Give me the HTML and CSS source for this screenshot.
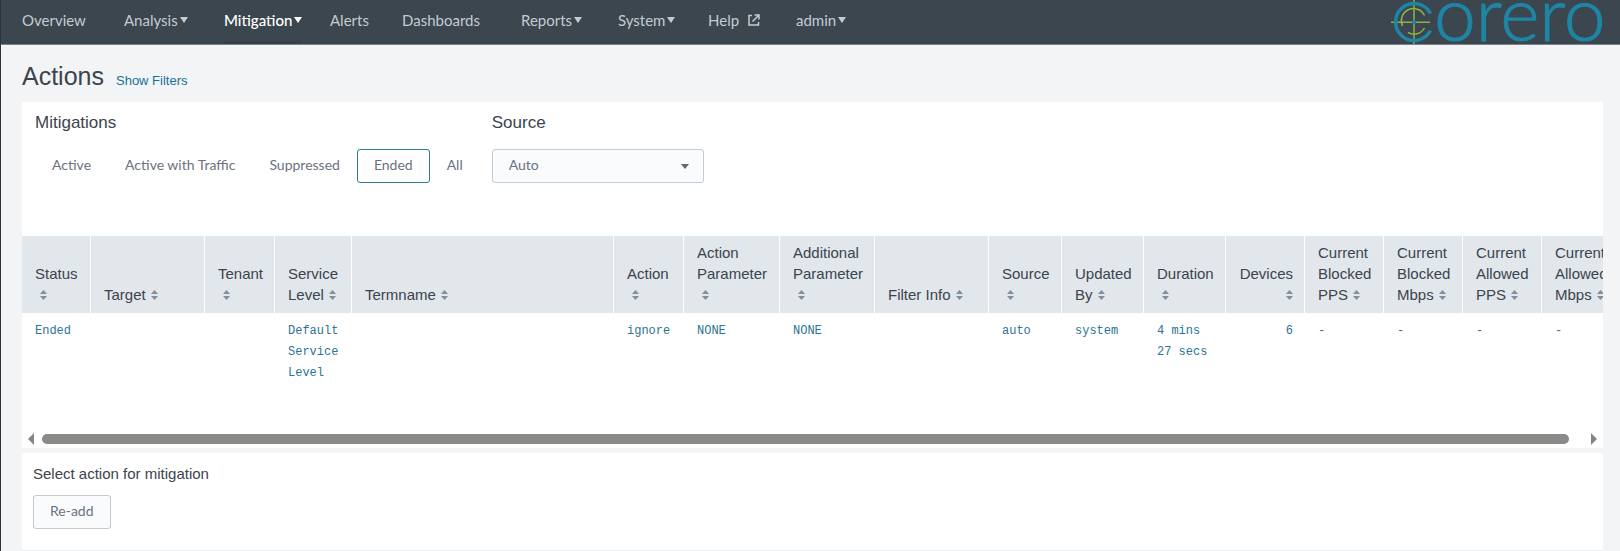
FILE: index.html
```html
<!DOCTYPE html>
<html lang="en">
<head>
    <meta charset="UTF-8">
    <meta name="viewport" content="width=device-width, initial-scale=1.0">
    <title>Actions</title>
    <link rel="stylesheet" href="styles.css">
</head>
<body>
<svg class="sprite" width="0" height="0" aria-hidden="true">
    <symbol id="sort" viewBox="0 0 7 10">
        <path d="M0 4 L3.5 0 L7 4 Z M0 6 L3.5 10 L7 6 Z"/>
    </symbol>
</svg>
<header class="navbar">
    <nav class="menu">
        <a href="#">Overview</a>
        <a href="#" class="has-caret">Analysis</a>
        <a href="#" class="has-caret active">Mitigation</a>
        <a href="#">Alerts</a>
        <a href="#">Dashboards</a>
        <a href="#" class="has-caret">Reports</a>
        <a href="#" class="has-caret">System</a>
        <a href="#">Help
            <svg class="external" viewBox="0 0 12 12" width="12" height="12" fill="none" stroke="currentColor" stroke-width="1.5">
                <path d="M4 1.5 H1 V11 H10.5 V8"/>
                <path d="M4.5 7.5 L10.5 1.5 M6.5 1 H11 V5.5"/>
            </svg>
        </a>
        <a href="#" class="has-caret">admin</a>
    </nav>
    <a href="#" class="logo">
        <svg viewBox="0 0 213 44" width="213" height="44">
            <g fill="none" stroke="#8db04a" stroke-width="1.5">
                <path d="M0 22.3 H39 M23 0 V44"/>
                <path d="M33.5 15.5 A12 12 0 0 0 11.5 26"/>
                <path d="M17 32.5 A12 12 0 0 0 33.5 28"/>
            </g>
            <path d="M39.5 13.5 A18.5 18.5 0 1 0 39.5 30.5" fill="none" stroke="#1f85a5" stroke-width="3.5"/>
            <circle cx="23" cy="22.3" r="2" fill="#1f85a5"/>
            <text class="wordmark" x="43" y="41">orero</text>
        </svg>
    </a>
</header>
<main>
    <div class="title-row">
        <h1>Actions</h1>
        <a href="#">Show Filters</a>
    </div>

    <section class="panel">
        <div class="filters">
            <div class="field">
                <h2>Mitigations</h2>
                <div class="switcher">
                    <button type="button">Active</button>
                    <button type="button">Active with Traffic</button>
                    <button type="button">Suppressed</button>
                    <button type="button" class="selected">Ended</button>
                    <button type="button">All</button>
                </div>
            </div>
            <div class="field">
                <label for="source">Source</label>
                <div class="select-wrap">
                    <select id="source">
                        <option>Auto</option>
                    </select>
                </div>
            </div>
        </div>

        <div class="table-wrap">
            <table>
                <colgroup>
                    <col class="w-69">
                    <col class="w-114">
                    <col class="w-70">
                    <col class="w-77">
                    <col>
                    <col class="w-70">
                    <col class="w-96">
                    <col class="w-95">
                    <col class="w-114">
                    <col class="w-73">
                    <col class="w-82">
                    <col class="w-82">
                    <col class="w-79">
                    <col class="w-79">
                    <col class="w-79">
                    <col class="w-79">
                    <col class="w-79">
                </colgroup>
                <thead>
                <tr>
                    <th>Status<svg class="sort"><use href="#sort"/></svg></th>
                    <th>Target<svg class="sort"><use href="#sort"/></svg></th>
                    <th>Tenant<svg class="sort"><use href="#sort"/></svg></th>
                    <th>Service Level<svg class="sort"><use href="#sort"/></svg></th>
                    <th>Termname<svg class="sort"><use href="#sort"/></svg></th>
                    <th>Action<svg class="sort"><use href="#sort"/></svg></th>
                    <th>Action Parameter<svg class="sort"><use href="#sort"/></svg></th>
                    <th>Additional Parameter<svg class="sort"><use href="#sort"/></svg></th>
                    <th>Filter Info<svg class="sort"><use href="#sort"/></svg></th>
                    <th>Source<svg class="sort"><use href="#sort"/></svg></th>
                    <th>Updated By<svg class="sort"><use href="#sort"/></svg></th>
                    <th>Duration<svg class="sort"><use href="#sort"/></svg></th>
                    <th class="numeric">Devices<svg class="sort"><use href="#sort"/></svg></th>
                    <th>Current Blocked PPS<svg class="sort"><use href="#sort"/></svg></th>
                    <th>Current Blocked Mbps<svg class="sort"><use href="#sort"/></svg></th>
                    <th>Current Allowed PPS<svg class="sort"><use href="#sort"/></svg></th>
                    <th>Current Allowed Mbps<svg class="sort"><use href="#sort"/></svg></th>
                </tr>
                </thead>
                <tbody>
                <tr>
                    <td>Ended</td>
                    <td></td>
                    <td></td>
                    <td>Default Service Level</td>
                    <td></td>
                    <td>ignore</td>
                    <td>NONE</td>
                    <td>NONE</td>
                    <td></td>
                    <td>auto</td>
                    <td>system</td>
                    <td>4 mins 27 secs</td>
                    <td class="numeric">6</td>
                    <td>-</td>
                    <td>-</td>
                    <td>-</td>
                    <td>-</td>
                </tr>
                </tbody>
            </table>
        </div>
        <div class="scrollbar">
            <span class="arrow arrow-left"></span>
            <span class="thumb"></span>
            <span class="arrow arrow-right"></span>
        </div>
    </section>

    <section class="panel actions">
        <p>Select action for mitigation</p>
        <button type="button" class="btn">Re-add</button>
    </section>
</main>
</body>
</html>
```
FILE: styles.css
```css
* {
    box-sizing: border-box;
}

body {
    margin: 0;
    min-height: 100vh;
    border-left: 1px solid #2f3338;
    background-color: #f2f4f6;
    color: #3c444d;
    font-family: "Liberation Sans", Arial, sans-serif;
    font-size: 15px;
    line-height: 21px;
    overflow-x: hidden;
}

a {
    color: #1a7197;
    text-decoration: none;
}

.sprite {
    position: absolute;
}

/* Navigation */
.navbar {
    display: flex;
    justify-content: space-between;
    height: 45px;
    padding: 0 16px 0 21px;
    background-color: #3c464e;
    border-bottom: 1px solid #7c8489;
}

.menu {
    display: grid;
    grid-template-columns: 102px 100px 106px 72px 119px 97px 90px 88px auto;
    font-family: Lato, sans-serif;
}

.menu a {
    display: flex;
    align-items: center;
    justify-self: start;
    padding-bottom: 4px;
    color: #c3cbd4;
    white-space: nowrap;
}

.menu a.active {
    color: #fff;
    font-weight: 500;
    border-bottom: 3px solid #393f48;
    padding-bottom: 1px;
}

.has-caret::after {
    content: "";
    margin-left: 2px;
    border: 4px solid transparent;
    border-top: 6px solid currentColor;
    border-bottom: 0;
}

.external {
    margin-left: 9px;
}

.logo svg {
    display: block;
    overflow: visible;
}

.wordmark {
    fill: #1f85a5;
    stroke: #1f85a5;
    stroke-width: 1px;
    font-family: Lato, sans-serif;
    font-size: 75px;
    font-weight: 300;
}

/* Page */
main {
    padding: 0 17px 0 21px;
}

.title-row {
    display: flex;
    align-items: baseline;
    gap: 12px;
    padding: 15px 0 10px;
    font-size: 13px;
}

h1 {
    margin: 0;
    font-size: 25px;
    font-weight: 400;
    line-height: 32px;
}

.panel {
    background-color: #fff;
}

.filters {
    display: flex;
    gap: 12px;
    padding: 10px 13px 53px;
}

h2,
.field label {
    display: block;
    margin: 0 0 16px;
    font-size: 17px;
    font-weight: 400;
    line-height: 21px;
}

.switcher {
    display: flex;
}

.switcher button,
.select-wrap select,
.btn {
    height: 34px;
    padding: 0 16px 3px;
    border: 1px solid transparent;
    border-radius: 3px;
    background-color: transparent;
    color: #6b7280;
    font-family: Lato, sans-serif;
    font-size: 14px;
}

.switcher .selected {
    border-color: #2b7f93;
}

.select-wrap {
    position: relative;
    width: 212px;
}

.select-wrap select {
    appearance: none;
    display: block;
    width: 100%;
}

.select-wrap select,
.btn {
    background-color: #f9fbfd;
    border-color: #c3cbd4;
}

.select-wrap::after {
    content: "";
    position: absolute;
    top: 15px;
    right: 15px;
    border: 4px solid transparent;
    border-top: 5px solid #5c6773;
    border-bottom: 0;
}

/* Results */
.table-wrap {
    overflow: hidden;
    min-height: 194px;
}

table {
    width: 100%;
    min-width: 1599px;
    table-layout: fixed;
    border-collapse: separate;
    border-spacing: 0;
}

th, td {
    text-align: left;
}

th {
    padding: 6px 11px 8px 13px;
    border-right: 1px solid #fff;
    background-color: #e1e7eb;
    font-weight: 400;
    vertical-align: bottom;
}

td {
    padding: 8px 12px 8px 13px;
    color: #2b7493;
    font-family: "Liberation Mono", monospace;
    font-size: 12px;
    vertical-align: top;
}

.numeric {
    text-align: right;
}

.sort {
    width: 7px;
    height: 10px;
    margin-left: 5px;
    fill: #818d99;
}

.w-69 { width: 69px; }
.w-70 { width: 70px; }
.w-73 { width: 73px; }
.w-77 { width: 77px; }
.w-79 { width: 79px; }
.w-82 { width: 82px; }
.w-95 { width: 95px; }
.w-96 { width: 96px; }
.w-114 { width: 114px; }

.scrollbar {
    display: flex;
    align-items: center;
    height: 18px;
    padding: 0 6px;
    gap: 8px;
}

.thumb {
    flex: 1;
    height: 10px;
    margin-right: 14px;
    border-radius: 5px;
    background-color: #8a8a88;
}

.arrow {
    border: 6px solid transparent;
}

.arrow-left {
    border-right-color: #858585;
    border-left: 0;
}

.arrow-right {
    border-left-color: #858585;
    border-right: 0;
}

.actions {
    margin-top: 5px;
    padding: 10px 11px 21px;
    border-bottom: 1px solid #eceef0;
}

.actions p {
    margin: 0 0 11px;
}
```
